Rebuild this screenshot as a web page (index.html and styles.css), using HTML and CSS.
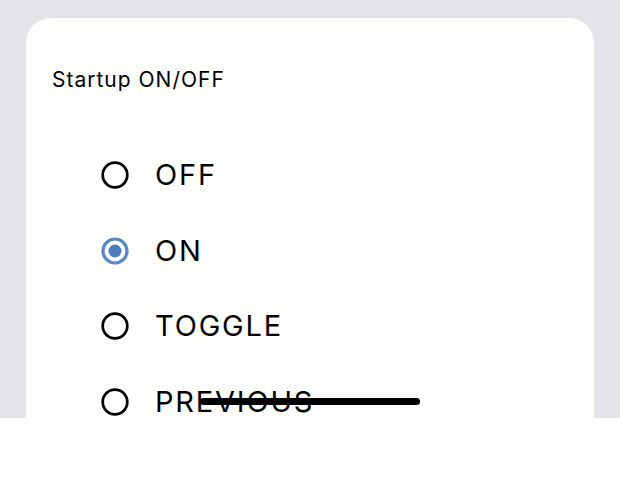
FILE: index.html
```html
<!DOCTYPE html>
<html>
<head>
<meta charset="utf-8">
<link rel="stylesheet" href="styles.css">
</head>
<body>
<div class="screen">
  <div class="card">
    <div class="title">Startup ON/OFF</div>
    <div class="options">
      <div class="option">
        <svg class="radio" width="28" height="28" viewBox="0 0 28 28"><circle cx="14" cy="14" r="12.3" fill="none" stroke="#000" stroke-width="2.7"/></svg>
        <span class="label">OFF</span>
      </div>
      <div class="option">
        <svg class="radio" width="28" height="28" viewBox="0 0 28 28"><circle cx="14" cy="14" r="12" fill="none" stroke="#5a86c2" stroke-width="3.2"/><circle cx="14" cy="14" r="6.5" fill="#4f7dbb"/></svg>
        <span class="label">ON</span>
      </div>
      <div class="option">
        <svg class="radio" width="28" height="28" viewBox="0 0 28 28"><circle cx="14" cy="14" r="12.3" fill="none" stroke="#000" stroke-width="2.7"/></svg>
        <span class="label">TOGGLE</span>
      </div>
      <div class="option">
        <svg class="radio" width="28" height="28" viewBox="0 0 28 28"><circle cx="14" cy="14" r="12.3" fill="none" stroke="#000" stroke-width="2.7"/></svg>
        <span class="label">PREVIOUS</span>
      </div>
    </div>
  </div>
  <div class="handle"></div>
</div>
</body>
</html>
```
FILE: styles.css
```css
html, body {
  margin: 0;
  padding: 0;
  background: #ffffff;
}
body {
  font-family: Inter, "Liberation Sans", sans-serif;
  color: #000;
}
.screen {
  position: relative;
  width: 620px;
  height: 418px;
  background: #e4e3e8;
  overflow: hidden;
  padding: 18px 0 0 26px;
  box-sizing: border-box;
}
.card {
  width: 568px;
  height: 600px;
  background: #fefefd;
  border-radius: 25px 25px 0 0;
  padding: 50px 0 0 26px;
  box-sizing: border-box;
}
.title {
  font-size: 21px;
  line-height: 24px;
  height: 24px;
  letter-spacing: 1px;
}
.options {
  display: flex;
  flex-direction: column;
  margin-top: 45px;
  padding-left: 49px;
}
.option {
  display: flex;
  align-items: center;
  height: 75.7px;
  gap: 26px;
}
.radio {
  display: block;
  flex: none;
}
.label {
  font-size: 29px;
  line-height: 36px;
  letter-spacing: 1.8px;
}
.handle {
  position: absolute;
  left: 200px;
  top: 398px;
  width: 220px;
  height: 7px;
  border-radius: 4px;
  background: #000;
}
```
